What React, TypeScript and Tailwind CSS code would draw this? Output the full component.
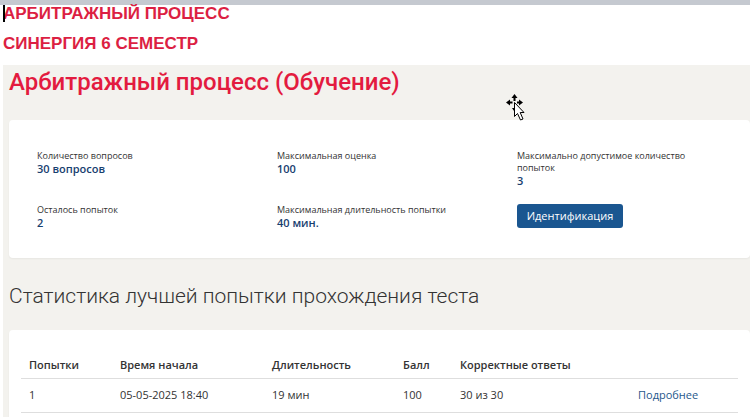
import React from 'react';

interface InfoItem {
  label: string;
  value: string;
}

interface Attempt {
  id: number;
  startedAt: string;
  duration: string;
  score: number;
  correct: string;
}

const topInfo: InfoItem[] = [
  { label: 'Количество вопросов', value: '30 вопросов' },
  { label: 'Максимальная оценка', value: '100' },
  { label: 'Максимально допустимое количество попыток', value: '3' },
];

const bottomInfo: InfoItem[] = [
  { label: 'Осталось попыток', value: '2' },
  { label: 'Максимальная длительность попытки', value: '40 мин.' },
];

const attempts: Attempt[] = [
  { id: 1, startedAt: '05-05-2025 18:40', duration: '19 мин', score: 100, correct: '30 из 30' },
];

const Info: React.FC<InfoItem> = ({ label, value }) => (
  <div className="max-w-[180px]">
    <dt className="text-[9px] leading-3 text-[#333333]">{label}</dt>
    <dd className="text-[11px] leading-[14px] font-semibold text-[#17406f]">{value}</dd>
  </div>
);

const MoveCursor = () => (
  <svg className="absolute left-[505px] top-[94px]" width="20" height="28" viewBox="0 0 20 28" aria-hidden="true">
    <path d="M9.500 0L12.500 4H10.500V7H8.500V4H6.500zM1 8.500L5 5.500V7.500H7.500V9.500H5V11.500zM18 8.500L14 5.500V7.500H12V9.500H14V11.500zM7 14h2v3z" fill="#000" />
    <path d="M9.500 8.500V22.500L12.500 19.500L15.500 26L18 25L15.200 18.500H19z" fill="#fff" stroke="#000" strokeWidth="1" />
  </svg>
);

const App: React.FC = () => {
  return (
    <div className="relative bg-white font-['Open_Sans','Noto_Sans',sans-serif]">
      <div className="h-[5px] bg-[#c5c9d0]" />
      <header className="flex flex-col gap-3 pl-[3px] pb-3 font-['Liberation_Sans',Arial,sans-serif] text-[17px] font-bold text-[#dc1f43]">
        <div className="relative leading-[18px]">
          <span className="absolute left-0 top-0 h-[17px] w-0.5 bg-black" />
          АРБИТРАЖНЫЙ ПРОЦЕСС
        </div>
        <div className="leading-[18px]">СИНЕРГИЯ 6 СЕМЕСТР</div>
      </header>

      <main className="ml-[3px] bg-[#f3f2ee] pl-[6px]">
        <h1 className="pt-[3px] pb-6 font-['Roboto',sans-serif] text-2xl leading-7 font-medium text-[#e31b3f]">
          Арбитражный процесс (Обучение)
        </h1>

        <section className="rounded-sm bg-white px-7 pt-[30px] pb-7 shadow-xs">
          <dl className="grid grid-cols-[240px_240px_1fr] gap-y-4">
            {topInfo.map((item) => (
              <Info key={item.label} {...item} />
            ))}
            {bottomInfo.map((item) => (
              <Info key={item.label} {...item} />
            ))}
            <div>
              <button type="button" className="block h-6 w-[106px] rounded-[3px] bg-[#1a5690] text-[11px] text-white">
                Идентификация
              </button>
            </div>
          </dl>
        </section>

        <h2 className="pt-6 pb-5 font-['Roboto',sans-serif] text-[21px] leading-7 font-light text-[#333333]">
          Статистика лучшей попытки прохождения теста
        </h2>

        <section className="rounded-sm bg-white px-3 pt-[22px] pb-4 shadow-xs">
          <table className="w-full table-fixed text-left text-[11px] text-[#333333]">
            <colgroup>
              <col className="w-[91px]" />
              <col className="w-[152px]" />
              <col className="w-[131px]" />
              <col className="w-[57px]" />
              <col className="w-[178px]" />
              <col />
            </colgroup>
            <thead>
              <tr className="h-[26px] border-b border-[#dedede]">
                <th className="pl-2 font-semibold">Попытки</th>
                <th className="pl-2 font-semibold">Время начала</th>
                <th className="pl-2 font-semibold">Длительность</th>
                <th className="pl-2 font-semibold">Балл</th>
                <th className="pl-2 font-semibold">Корректные ответы</th>
                <th className="pl-2" aria-label="Подробнее" />
              </tr>
            </thead>
            <tbody>
              {attempts.map((a) => (
                <tr key={a.id} className="h-[34px] border-b border-[#dedede]">
                  <td className="pl-2">{a.id}</td>
                  <td className="pl-2">{a.startedAt}</td>
                  <td className="pl-2">{a.duration}</td>
                  <td className="pl-2">{a.score}</td>
                  <td className="pl-2">{a.correct}</td>
                  <td className="pl-2">
                    <a href="#details" className="text-[#1f588c]">Подробнее</a>
                  </td>
                </tr>
              ))}
            </tbody>
          </table>
        </section>
      </main>
      <MoveCursor />
    </div>
  );
};

export default App;
